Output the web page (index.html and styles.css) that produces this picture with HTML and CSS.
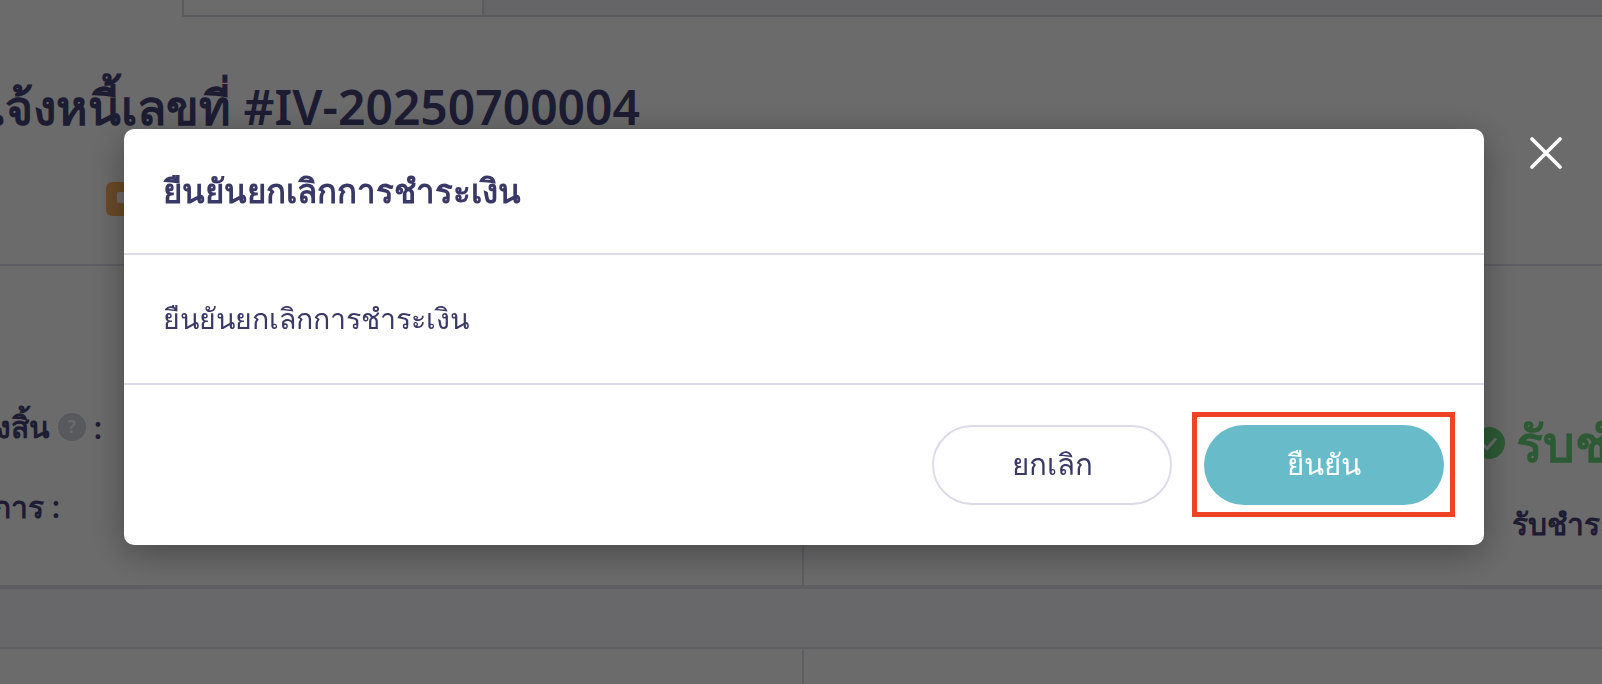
FILE: index.html
```html
<!DOCTYPE html>
<html lang="th">
<head>
    <title>ยืนยันยกเลิกการชำระเงิน</title>
    <meta charset="UTF-8">
    <link rel="stylesheet" href="styles.css">
</head>
<body>

<div class="page">
    <div class="top-bar">
        <div class="top-spacer"></div>
        <div class="top-tab"></div>
        <div class="top-rest"></div>
    </div>

    <div class="invoice-head">
        <h1 class="invoice-title">ใบแจ้งหนี้เลขที่ #IV-20250700004</h1>
        <div class="status-badge"><span class="status-icon"></span></div>
    </div>

    <div class="card">
        <div class="card-col">
            <div class="info-row row-total">
                <span class="info-label">ยอดรวมทั้งสิ้น</span>
                <span class="help-dot">?</span>
                <span class="info-colon">:</span>
            </div>
            <div class="info-row row-items">
                <span class="info-label">รายการ :</span>
            </div>
        </div>
        <div class="card-col card-col-right">
            <div class="paid-status">
                <svg class="paid-icon" viewBox="0 0 32 32"><circle cx="16" cy="16" r="16" fill="#69d67e"/><path d="M9 16.5l5 5 9-10" fill="none" stroke="#fff" stroke-width="3"/></svg>
                <span>รับชำระเงินแล้ว</span>
            </div>
            <div class="paid-label">รับชำระเงินเมื่อ</div>
        </div>
    </div>

    <div class="card-gap"></div>

    <div class="card card-next">
        <div class="card-col"></div>
        <div class="card-col card-col-right"></div>
    </div>
</div>

<div class="overlay">
    <div class="modal">
        <div class="modal-head">
            <h2 class="modal-title">ยืนยันยกเลิกการชำระเงิน</h2>
        </div>
        <div class="modal-body">ยืนยันยกเลิกการชำระเงิน</div>
        <div class="modal-foot">
            <button class="btn btn-cancel">ยกเลิก</button>
            <button class="btn btn-confirm">ยืนยัน<span class="highlight-box"></span></button>
        </div>
    </div>
    <svg class="close-icon" viewBox="0 0 32 32"><path d="M2 2l28 28M30 2L2 30" stroke="#fff" stroke-width="3.6" stroke-linecap="round"/></svg>
</div>

</body>
</html>
```

FILE: styles.css
```css
html, body {
    margin: 0;
    height: 100%;
    overflow: hidden;
}

body {
    background: #fff;
    color: #45437a;
    font-family: "Noto Sans", "Open Sans", sans-serif;
}

.page {
    height: 684px;
    overflow: hidden;
}

.top-bar {
    display: flex;
    height: 17px;
}
.top-spacer {
    width: 182px;
}
.top-tab {
    width: 298px;
    border: solid #d6d6e2;
    border-width: 0 2px 2px;
}
.top-rest {
    flex: 1;
    background: #f1f1f8;
    border-bottom: 2px solid #d6d6e2;
}

.invoice-head {
    height: 247px;
    overflow: hidden;
}
.invoice-title {
    display: flex;
    justify-content: flex-end;
    width: 640px;
    margin: 56px 0 0 0;
    font-size: 48px;
    line-height: 68px;
    font-weight: 600;
    white-space: nowrap;
}
.status-badge {
    width: 60px;
    height: 34px;
    margin: 41px 0 0 106px;
    padding: 10px 0 0 11px;
    box-sizing: border-box;
    background: #ffb060;
    border-radius: 6px;
}
.status-icon {
    display: block;
    width: 14px;
    height: 11px;
    background: #fff;
    border-radius: 2px;
}

.card {
    display: grid;
    grid-template-columns: 802px 1fr;
    box-sizing: border-box;
    height: 325px;
    border-top: 2px solid #e0e0ea;
    border-bottom: 4px solid #e0e0ea;
}
.card-col {
    min-width: 0;
    overflow: hidden;
}
.card-col-right {
    border-left: 2px solid #e0e0ea;
    padding-left: 669px;
}

.info-row {
    display: flex;
    justify-content: flex-end;
    align-items: center;
    width: 102px;
    font-size: 30px;
    font-weight: 600;
    white-space: nowrap;
}
.row-total {
    height: 40px;
    margin-top: 141px;
    gap: 8px;
}
.row-items {
    width: 60px;
    height: 40px;
    margin-top: 40px;
}
.help-dot {
    flex: none;
    width: 28px;
    height: 28px;
    border-radius: 50%;
    background: #d2d4dd;
    color: #fff;
    font-size: 17px;
    line-height: 28px;
    text-align: center;
}

.paid-status {
    display: flex;
    align-items: center;
    gap: 11px;
    margin: 145px 0 0 0;
    color: #69d67e;
    font-size: 50px;
    font-weight: 600;
    line-height: 64px;
    white-space: nowrap;
}
.paid-icon {
    flex: none;
    width: 32px;
    height: 32px;
}
.paid-label {
    margin: 29px 0 0 39px;
    font-size: 30px;
    font-weight: 600;
    line-height: 40px;
    white-space: nowrap;
}

.card-gap {
    height: 58px;
    background: #f8f8fc;
}
.card-next {
    border-bottom: 0;
}

.overlay {
    position: fixed;
    inset: 0;
    background: rgba(0, 0, 0, 0.58);
    padding: 129px 118px 0 124px;
}

.modal {
    display: flex;
    flex-direction: column;
    height: 416px;
    background: #fff;
    border-radius: 10px;
    box-shadow: 0 8px 36px rgba(0, 0, 0, 0.35);
    color: #3a3866;
}
.modal-head {
    display: flex;
    align-items: center;
    height: 126px;
    padding: 0 39px;
    box-sizing: border-box;
    border-bottom: 2px solid #dddbe8;
}
.modal-title {
    margin: 0;
    font-size: 33px;
    font-weight: 600;
}
.modal-body {
    display: flex;
    align-items: center;
    height: 130px;
    padding: 0 39px;
    box-sizing: border-box;
    border-bottom: 2px solid #dddbe8;
    font-size: 28.5px;
    font-weight: 300;
}
.modal-foot {
    display: flex;
    justify-content: flex-end;
    gap: 32px;
    padding: 40px;
}

.btn {
    position: relative;
    width: 240px;
    height: 80px;
    padding: 0 0 2px;
    border-radius: 40px;
    font-family: inherit;
    font-size: 29.5px;
    font-weight: 300;
}
.btn-cancel {
    background: #fff;
    border: 2px solid #dddbe8;
    color: #3a3866;
}
.btn-confirm {
    background: #68bcca;
    border: 0;
    color: #fff;
}
.highlight-box {
    position: absolute;
    top: -13px;
    right: -11px;
    bottom: -12px;
    left: -12px;
    border: 5px solid #ee4325;
}

.close-icon {
    position: absolute;
    top: 137px;
    left: 1530px;
    width: 32px;
    height: 32px;
}
```
